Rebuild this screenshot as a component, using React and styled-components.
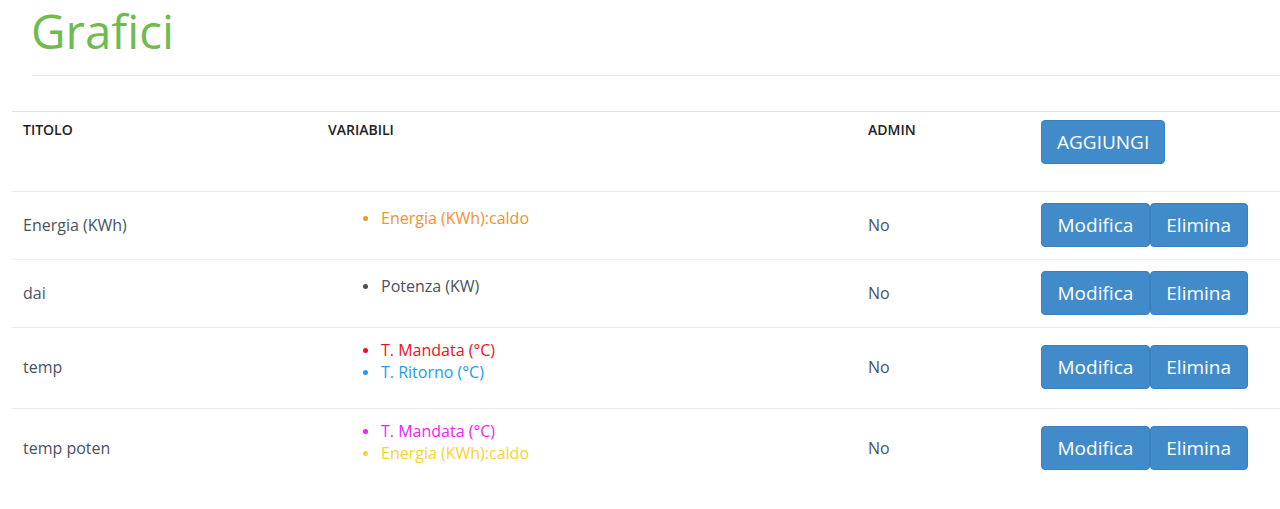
import React from "react";
import styled, { createGlobalStyle } from "styled-components";

const Global = createGlobalStyle`
  html, body { margin: 0; padding: 0; background: #fff; }
  body { font-family: "Open Sans", "Liberation Sans", sans-serif; color: #4a5260; overflow: hidden; }
`;

const Page = styled.div`
  width: 1280px;
  display: flex;
  flex-direction: column;
`;

const Header = styled.header`
  padding-left: 32px;
`;

const Title = styled.h1`
  margin: 0 0 0 -1px;
  padding: 2px 0 0;
  font-weight: 400;
  font-size: 47.5px;
  line-height: 58px;
  color: #6fbb4f;
`;

const Rule = styled.hr`
  margin: 15px 0 0;
  border: 0;
  border-top: 1px solid #e6e9ed;
`;

const Table = styled.table`
  margin: 35px 0 0 12px;
  width: 1268px;
  border-collapse: collapse;
  table-layout: fixed;
  border-top: 1px solid #dfe4ec;
`;

const Th = styled.th`
  width: ${(p) => p.$w}px;
  height: 80px;
  box-sizing: border-box;
  padding: 8px 11px 0;
  text-align: left;
  vertical-align: top;
  font-size: 14px;
  line-height: 20px;
  font-weight: 600;
  color: #222;
`;

const Row = styled.tr`
  border-top: 1px solid #e9eef3;
  height: ${(p) => p.$h}px;
`;

const Td = styled.td`
  padding: 10px 11px 12px;
  vertical-align: middle;
  font-size: 16px;
  line-height: 22px;
  color: #4a5260;
`;

const VarList = styled.ul`
  margin: 0 0 13px;
  padding: 0 0 0 53px;
  list-style: none;
`;

const VarItem = styled.li`
  position: relative;
  color: ${(p) => p.$c};
  &::before {
    content: "";
    position: absolute;
    left: -18px;
    top: 9px;
    width: 5px;
    height: 5px;
    border-radius: 50%;
    background: ${(p) => p.$c};
  }
`;

const Actions = styled.div`
  display: flex;
  gap: 0;
`;

const Button = styled.button`
  height: 44px;
  box-sizing: border-box;
  padding: 0 ${(p) => p.$px || 15.5}px;
  border: 1px solid #3a7fbf;
  border-radius: 4px;
  background: #428bca;
  color: #fff;
  font-family: "Open Sans", "Liberation Sans", sans-serif;
  font-size: 19px;
  line-height: 42px;
  cursor: pointer;
`;

const rows = [
  { t: "Energia (KWh)", v: [["Energia (KWh):caldo", "#f7902f"]], h: 68 },
  { t: "dai", v: [["Potenza (KW)", "#4a5260"]], h: 68 },
  { t: "temp", v: [["T. Mandata (°C)", "#f0111c"], ["T. Ritorno (°C)", "#1e9cf0"]], h: 81 },
  { t: "temp poten", v: [["T. Mandata (°C)", "#f21ff0"], ["Energia (KWh):caldo", "#fdd22e"]], h: 81 },
];

export default function App() {
  return (
    <Page>
      <Global />
      <Header>
        <Title>Grafici</Title>
        <Rule />
      </Header>
      <Table>
        <thead>
          <tr>
            <Th $w={305}>TITOLO</Th>
            <Th $w={540}>VARIABILI</Th>
            <Th $w={173}>ADMIN</Th>
            <Th $w={250}>
              <Button $px={15}>AGGIUNGI</Button>
            </Th>
          </tr>
        </thead>
        <tbody>
          {rows.map((r, i) => (
            <Row key={i} $h={r.h}>
              <Td>{r.t}</Td>
              <Td>
                <VarList>
                  {r.v.map(([n, c], j) => (
                    <VarItem key={j} $c={c}>{n}</VarItem>
                  ))}
                </VarList>
              </Td>
              <Td>No</Td>
              <Td>
                <Actions>
                  <Button>Modifica</Button>
                  <Button>Elimina</Button>
                </Actions>
              </Td>
            </Row>
          ))}
        </tbody>
      </Table>
    </Page>
  );
}
